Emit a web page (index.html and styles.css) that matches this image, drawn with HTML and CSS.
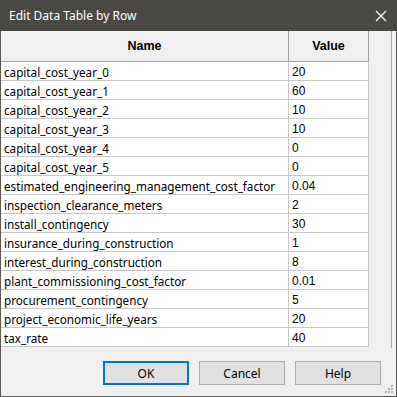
FILE: index.html
```html
<!DOCTYPE html>
<html lang="en">
<head>
    <meta charset="UTF-8">
    <title>Edit Data Table by Row</title>
    <link rel="stylesheet" href="styles.css">
</head>
<body>

<div class="dialog">
    <div class="titlebar">
        <span class="title">Edit Data Table by Row</span>
        <svg class="close" width="12" height="12" viewBox="0 0 12 12">
            <path d="M1 1 L11 11 M11 1 L1 11" stroke="#ffffff" stroke-width="1.2" fill="none"/>
        </svg>
    </div>

    <div class="grid">
        <table>
            <thead>
                <tr>
                    <th class="col-name">Name</th>
                    <th class="col-value">Value</th>
                </tr>
            </thead>
            <tbody>
                <tr><td>capital_cost_year_0</td><td class="val">20</td></tr>
                <tr><td>capital_cost_year_1</td><td class="val">60</td></tr>
                <tr><td>capital_cost_year_2</td><td class="val">10</td></tr>
                <tr><td>capital_cost_year_3</td><td class="val">10</td></tr>
                <tr><td>capital_cost_year_4</td><td class="val">0</td></tr>
                <tr><td>capital_cost_year_5</td><td class="val">0</td></tr>
                <tr><td>estimated_engineering_management_cost_factor</td><td class="val">0.04</td></tr>
                <tr><td>inspection_clearance_meters</td><td class="val">2</td></tr>
                <tr><td>install_contingency</td><td class="val">30</td></tr>
                <tr><td>insurance_during_construction</td><td class="val">1</td></tr>
                <tr><td>interest_during_construction</td><td class="val">8</td></tr>
                <tr><td>plant_commissioning_cost_factor</td><td class="val">0.01</td></tr>
                <tr><td>procurement_contingency</td><td class="val">5</td></tr>
                <tr><td>project_economic_life_years</td><td class="val">20</td></tr>
                <tr><td>tax_rate</td><td class="val">40</td></tr>
            </tbody>
        </table>
    </div>

    <div class="buttons">
        <button class="btn default">OK</button>
        <button class="btn">Cancel</button>
        <button class="btn">Help</button>
    </div>

    <svg class="grip" width="10" height="10" viewBox="0 0 10 10">
        <rect x="7" y="1" width="2" height="2" fill="#b8b8b8"/>
        <rect x="4" y="4" width="2" height="2" fill="#b8b8b8"/>
        <rect x="7" y="4" width="2" height="2" fill="#b8b8b8"/>
        <rect x="1" y="7" width="2" height="2" fill="#b8b8b8"/>
        <rect x="4" y="7" width="2" height="2" fill="#b8b8b8"/>
        <rect x="7" y="7" width="2" height="2" fill="#b8b8b8"/>
    </svg>
</div>

</body>
</html>
```

FILE: styles.css
```css
/* Windows style dialog */
body {
    margin: 0;
    font-family: "Noto Sans", "Liberation Sans", sans-serif;
}
.dialog {
    position: relative;
    width: 397px;
    height: 397px;
    box-sizing: border-box;
    background: #f0f0f0;
    border-left: 1px solid #5b5956;
    border-right: 1px solid #5b5956;
    border-bottom: 1px solid #5b5956;
    display: flex;
    flex-direction: column;
}
.titlebar {
    height: 31px;
    margin: 0 -1px;
    background: #4a4845;
    color: #ffffff;
    display: flex;
    align-items: center;
    justify-content: space-between;
    padding: 0 10px 0 9px;
    flex-shrink: 0;
}
.title {
    font-size: 12px;
}
.close {
    margin-top: 1px;
}
.grid {
    height: 317px;
    margin-right: 4px;
    background: #f0f0f0;
    border-right: 1px solid #a8a8a8;
    overflow: hidden;
    flex-shrink: 0;
}
table {
    border-collapse: collapse;
    table-layout: fixed;
    width: 367px;
}
th {
    height: 30px;
    padding: 0;
    background: #f0f0f0;
    border-right: 1px solid #a0a0a0;
    border-bottom: 1px solid #a0a0a0;
    font-family: "Liberation Sans", sans-serif;
    font-size: 12.5px;
    font-weight: bold;
    color: #000000;
    text-align: center;
}
.col-name {
    width: 287px;
}
.col-value {
    width: 79px;
}
td {
    height: 17px;
    padding: 1px 0 0 3px;
    background: #ffffff;
    border-right: 1px solid #c8c8c8;
    border-bottom: 1px solid #c8c8c8;
    font-size: 11.7px;
    color: #000000;
    white-space: nowrap;
    overflow: hidden;
}
td.val {
    font-family: "Liberation Sans", sans-serif;
    font-size: 12px;
}
.buttons {
    display: flex;
    justify-content: flex-end;
    gap: 10px;
    padding: 13px 15px 0 0;
}
.btn {
    width: 86px;
    height: 24px;
    background: #e1e1e1;
    border: 1px solid #adadad;
    font-family: "Noto Sans", sans-serif;
    font-size: 12px;
    color: #000000;
    padding: 0;
}
.btn.default {
    border: 2px solid #0078d7;
}
.grip {
    position: absolute;
    right: 2px;
    bottom: 2px;
}
```
